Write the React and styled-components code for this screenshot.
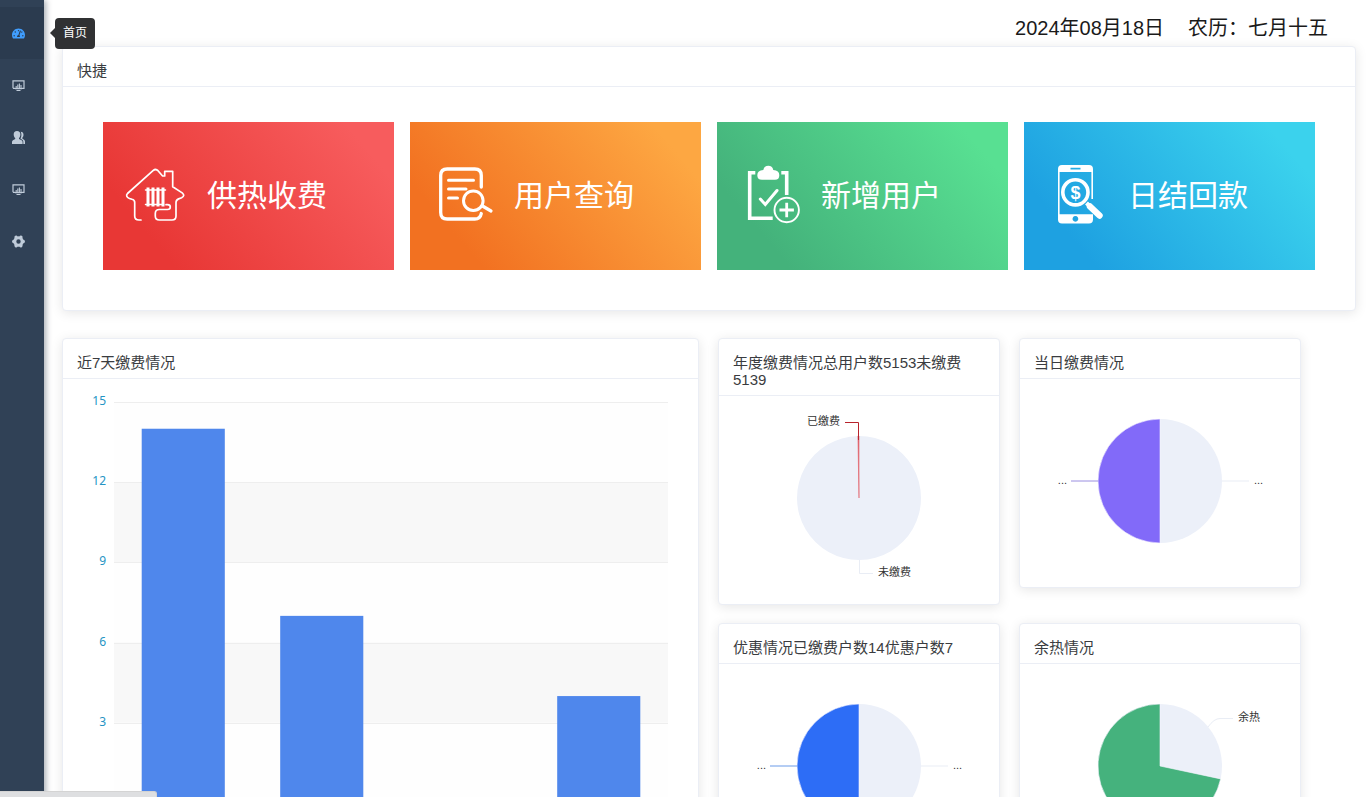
import React from 'react';
import styled, {createGlobalStyle} from 'styled-components';
import {FaTachometerAlt} from 'react-icons/fa';

const GlobalStyle = createGlobalStyle`
    * {
        box-sizing: border-box;
    }

    body {
        margin: 0;
        background: #ffffff;
        color: #3a3c40;
        font-family: "Liberation Sans", "Noto Sans CJK SC", sans-serif;
    }
`

const AppWrapper = styled.div`
    display: flex;
    height: 100vh;
    overflow: hidden;
`

const Sidebar = styled.nav`
    position: relative;
    z-index: 2;
    flex: none;
    width: 44px;
    padding-top: 7px;
    background: #304156;
    box-shadow: 2px 0 6px rgba(0, 21, 41, 0.35);
`

const SidebarLink = styled.a`
    position: relative;
    display: flex;
    align-items: center;
    height: 52px;
    padding-left: 12px;
    color: ${props => props.$active ? '#409eff' : '#bfcbd9'};
    background: ${props => props.$active ? '#2b3b4f' : 'transparent'};

    svg {
        display: block;
        width: 13px;
        height: 13px;
    }
`

const Tooltip = styled.span`
    position: absolute;
    top: 11px;
    left: 55px;
    padding: 7px 8px;
    border-radius: 4px;
    background: #303133;
    color: #ffffff;
    font-size: 12px;
    line-height: 17px;
    white-space: nowrap;

    &::before {
        content: '';
        position: absolute;
        top: 10px;
        left: -5px;
        border: 5px solid transparent;
        border-left: none;
        border-right-color: #303133;
    }
`

const Main = styled.main`
    flex: 1;
    min-width: 0;
    padding: 0 10px 0 18px;
`

const DateBar = styled.header`
    display: flex;
    justify-content: flex-end;
    align-items: center;
    gap: 24px;
    height: 46px;
    padding: 10px 28px 0 0;
    color: #1a1a1a;
    font-size: 20px;
    line-height: 28px;
`

const Card = styled.section`
    min-width: 0;
    border: 1px solid #ebeef5;
    border-radius: 4px;
    background: #ffffff;
    box-shadow: 0 2px 12px rgba(0, 0, 0, 0.1);
    grid-row: ${props => props.$tall ? 'span 2' : 'auto'};
`

const CardTitle = styled.h2`
    margin: 0;
    padding: 15px 14px 7px;
    border-bottom: 1px solid #ebeef5;
    font-size: 15px;
    font-weight: 400;
    line-height: 17px;
`

const TileGrid = styled.div`
    display: grid;
    grid-template-columns: repeat(4, 1fr);
    gap: 16px;
    padding: 35px 40px;
    padding-bottom: 40px;
`

const Tile = styled.a`
    display: flex;
    align-items: center;
    gap: 20px;
    height: 148px;
    padding-left: 20px;
    background: linear-gradient(50deg, ${props => props.$from} 18%, ${props => props.$to} 88%);
    color: #ffffff;
    font-size: 30px;
    line-height: 40px;
    text-decoration: none;

    svg {
        flex: none;
        width: 64px;
        height: 64px;
    }
`

const ChartGrid = styled.div`
    display: grid;
    grid-template-columns: 637fr 282fr 282fr;
    align-items: start;
    gap: 18px 19px;
    margin-top: 27px;
    padding-right: 55px;
`

const Chart = styled.svg`
    display: block;
    width: 100%;
    height: auto;
`

const AxisLabel = styled.text`
    fill: #2594c4;
    font-family: "Noto Sans", sans-serif;
    font-size: 12px;
    text-anchor: end;
`

const PieLabel = styled.text`
    fill: #333333;
    font-size: 11px;
    text-anchor: ${props => props.$end ? 'end' : 'start'};
`

const StatusBar = styled.div`
    position: fixed;
    z-index: 3;
    bottom: 0;
    left: 0;
    width: 157px;
    height: 6px;
    border: 1px solid #d4d4d4;
    border-width: 1px 1px 0 0;
    border-radius: 0 3px 0 0;
    background: #dedfe1;
`

const MonitorIcon = () => (
    <svg viewBox="0 0 13 13" fill="none" stroke="currentColor" aria-hidden="true">
        <path d="M1 9.3V1.8h11v7.5H9.5M1 9.3h2.5" strokeWidth="1.2" />
        <path d="M4.2 9V7M5.8 9V5.5M7.4 9V4.5M9 9V6" strokeWidth="1.1" />
        <path d="M3 9.6h7M4.5 11.5h4" strokeWidth="1.2" />
    </svg>
)

const UsersIcon = () => (
    <svg viewBox="0 0 13 13" fill="currentColor" aria-hidden="true">
        <path d="M5 0C7.2 0 8.4 1.4 8.4 3.4c0 1.500-.6 2.900-1.400 3.600v1l2.600 1.300c.7.4 1 .9 1 1.700v1.900H0V11c0-.8.3-1.300 1-1.700L3.200 8V7C2.300 6.300 1.700 4.900 1.700 3.400 1.700 1.400 2.800 0 5 0z" />
        <path d="M8.700.8c1.800 0 2.800 1.200 2.800 2.900 0 1.300-.5 2.400-1.200 3v.9l1.700 1.200c.6.4 1 .9 1 1.600v2.500h-1.700V11c0-1.200-.5-2-1.500-2.500L8.400 7.600c.6-.9 1-2.500 1-4.100 0-1.100-.3-2-.7-2.700z" />
    </svg>
)

const GearIcon = () => (
    <svg viewBox="0 0 13 13" fill="currentColor" aria-hidden="true">
        <circle cx="6.500" cy="6.500" r="3.700" fill="none" stroke="currentColor" strokeWidth="3" />
        {[0, 60, 120, 180, 240, 300].map(angle => (
            <circle key={angle} cx="11.300" cy="6.500" r="1.700" transform={`rotate(${angle} 6.5 6.5)`} />
        ))}
    </svg>
)

const HouseIcon = () => (
    <svg viewBox="0 0 64 64" fill="none" stroke="currentColor" strokeLinecap="round" strokeLinejoin="round" aria-hidden="true">
        <path d="M18 56h-2q-4.300 0-4.300-4V38.500q0-2.500-2.700-3.200l-2.500-.8Q2 32.500 4.500 29.500L30 6.700q2.700-2.400 5 0l4.600 5.300h2.100V7.300h8v15.400l9.500 6.200q3.300 2.800-.6 4.800l-3 1.200Q53 36 53 38.500V52q0 4-4 4H36.300q-4 0-4-4v-2.500q0-4 4-4h8.200q2.800 0 2.800-2.400t-2.800-2.400H43" strokeWidth="1.700" />
        <path d="M25 23.500v19M30 23.500v19M35 23.500v19M40 23.500v19" strokeWidth="3" strokeLinecap="butt" />
        <path d="M22.500 26h20M22.500 40.500h18" strokeWidth="1.500" />
    </svg>
)

const SearchDocIcon = () => (
    <svg viewBox="0 0 64 64" fill="none" stroke="currentColor" strokeLinecap="round" aria-hidden="true">
        <path d="M51.300 23V11.500Q51.300 5 44.800 5H17.200q-6.500 0-6.500 6.500v37q0 6.500 6.500 6.500h27.600q5.500 0 6.500-5.500" strokeWidth="3.300" />
        <path d="M18.500 16.200h25M18.500 25h17.500M18.500 34h9" strokeWidth="3" />
        <circle cx="43.300" cy="36.700" r="9.800" strokeWidth="3" />
        <path d="M52.500 42l8.500 5" strokeWidth="3.200" />
    </svg>
)

const AddUserIcon = () => (
    <svg viewBox="0 0 64 64" fill="none" stroke="currentColor" aria-hidden="true">
        <path d="M18.300 8.700h-5.600v45.600h23M44.300 8.700h5.400V31" strokeWidth="3.600" />
        <path d="M25 15.700h13q4.300 0 4.300-4.500 0-4.700-6-5.200-1-4.200-5-4.200t-5 4.200q-6 .5-6 5.200 0 4.500 4.700 4.500z" fill="currentColor" stroke="none" />
        <path d="M23.300 35l5 5.500L40 26.500" strokeWidth="3" strokeLinecap="round" />
        <circle cx="49.700" cy="46" r="12.200" strokeWidth="1.900" />
        <path d="M42.500 46h14.400M49.700 38.800v14.400" strokeWidth="2.800" />
    </svg>
)

const PhoneIcon = () => (
    <svg viewBox="0 0 64 64" fill="none" stroke="currentColor" aria-hidden="true">
        <path d="M14.800 8v43M48.200 8v27" strokeWidth="1.600" />
        <path d="M14 8V5q0-4 4-4h27q4 0 4 4v3zM26.500 3.800v1.800h10V3.800z" fill="currentColor" fillRule="evenodd" stroke="none" />
        <path d="M14 50.300h35v5.200q0 4-4 4H18q-4 0-4-4zM31.400 52a2.900 2.900 0 1 0 .01 0z" fill="currentColor" fillRule="evenodd" stroke="none" />
        <circle cx="31.400" cy="28.300" r="12.600" strokeWidth="3.600" />
        <path d="M42.500 39l3 3" strokeWidth="4" />
        <path d="M46 42.500l9.500 9" strokeWidth="6.400" strokeLinecap="round" />
        <text x="31.400" y="34.500" fill="currentColor" stroke="none" fontSize="18" fontWeight="700" textAnchor="middle">$</text>
    </svg>
)

const menu = [
    {label: '首页', icon: FaTachometerAlt, active: true},
    {label: '收费', icon: MonitorIcon},
    {label: '用户', icon: UsersIcon},
    {label: '报表', icon: MonitorIcon},
    {label: '设置', icon: GearIcon},
]

const tiles = [
    {label: '供热收费', icon: HouseIcon, from: '#e83735', to: '#f75c5d'},
    {label: '用户查询', icon: SearchDocIcon, from: '#f27121', to: '#fda742'},
    {label: '新增用户', icon: AddUserIcon, from: '#44b27b', to: '#58e092'},
    {label: '日结回款', icon: PhoneIcon, from: '#1ea1e1', to: '#3bd2ed'},
]

const payments = [14, 7, 0, 4];
const ticks = [15, 12, 9, 6, 3];

function BarChart() {
    const left = 51;
    const right = 605;
    const bottom = 424;
    const top = 23;
    const unit = (bottom - top) / 15;
    const slot = (right - left) / payments.length;
    const barWidth = slot * 0.6;

    return (
        <Chart viewBox="0 0 635 460" role="img" aria-label="近7天缴费情况">
            {ticks.map((tick, i) => {
                const y = bottom - tick * unit;
                return (
                    <g key={tick}>
                        <rect x={left} y={y} width={right - left} height={unit * 3} fill={i % 2 ? '#f8f8f8' : '#fefefe'} />
                        <line x1={left} x2={right} y1={Math.round(y) + 0.5} y2={Math.round(y) + 0.5} stroke="#eeeeee" />
                        <AxisLabel x={left - 8} y={y + 3}>{tick}</AxisLabel>
                    </g>
                )
            })}
            {payments.map((value, i) => (
                <rect
                    key={i}
                    x={left + slot * i + (slot - barWidth) / 2}
                    y={bottom - value * unit}
                    width={barWidth}
                    height={value * unit}
                    fill="#4f87ec"
                />
            ))}
        </Chart>
    )
}

const CX = 140;
const CY = 102;
const R = 62;

const point = deg => {
    const a = deg * Math.PI / 180;
    return `${CX + R * Math.sin(a)} ${CY - R * Math.cos(a)}`;
}

const slice = (from, to) => (
    `M${CX} ${CY}L${point(from)}A${R} ${R} 0 ${to - from > 180 ? 1 : 0} 1 ${point(to)}Z`
)

function PieChart({name, color, lineColor, split, labels}) {
    return (
        <Chart viewBox="0 0 280 208" role="img" aria-label={name}>
            <path d={slice(0, split)} fill="#ecf0f9" />
            <path d={slice(split, 360)} fill={color} stroke={split < 350 ? '#f6f4ff' : color} strokeWidth="0.600" />
            {labels.map((label, i) => (
                <g key={i}>
                    <path d={label.line} fill="none" stroke={label.muted ? '#e9edf5' : lineColor} />
                    <PieLabel x={label.x} y={label.y} $end={label.end}>{label.text}</PieLabel>
                </g>
            ))}
        </Chart>
    )
}

const halfLabels = [
    {text: '...', x: 47, y: 105, end: true, line: 'M78 102H51'},
    {text: '...', x: 234, y: 105, muted: true, line: 'M202 102H229'},
]

const pies = [
    {
        title: '年度缴费情况总用户数5153未缴费5139',
        color: '#e0616b',
        lineColor: '#b8232c',
        split: 359,
        labels: [
            {text: '已缴费', x: 121, y: 29, end: true, line: 'M139.500 44V26.500H126'},
            {text: '未缴费', x: 159, y: 180, muted: true, line: 'M140.500 164V177.500H154'},
        ],
    },
    {title: '当日缴费情况', color: '#826af9', lineColor: '#9a8ee0', split: 180, labels: halfLabels},
    {title: '优惠情况已缴费户数14优惠户数7', color: '#2d6df6', lineColor: '#6b9be8', split: 180, labels: halfLabels},
    {
        title: '余热情况',
        color: '#45b27d',
        lineColor: '#45b27d',
        split: 102,
        labels: [
            {text: '余热', x: 218, y: 57, muted: true, line: 'M188 63Q194 54.500 200 54.500H213'},
        ],
    },
]

function App() {
    return (
        <AppWrapper>
            <GlobalStyle />
            <Sidebar>
                {menu.map(({label, icon: Icon, active}, i) => (
                    <SidebarLink key={i} href="#" aria-label={label} $active={active}>
                        <Icon />
                        {active && <Tooltip role="tooltip">{label}</Tooltip>}
                    </SidebarLink>
                ))}
            </Sidebar>
            <Main>
                <DateBar>
                    <span>2024年08月18日</span>
                    <span>农历：七月十五</span>
                </DateBar>
                <Card>
                    <CardTitle>快捷</CardTitle>
                    <TileGrid>
                        {tiles.map(({label, icon: Icon, from, to}) => (
                            <Tile key={label} href="#" $from={from} $to={to}>
                                <Icon />
                                {label}
                            </Tile>
                        ))}
                    </TileGrid>
                </Card>
                <ChartGrid>
                    <Card $tall>
                        <CardTitle>近7天缴费情况</CardTitle>
                        <BarChart />
                    </Card>
                    {pies.map(({title, ...pie}) => (
                        <Card key={title}>
                            <CardTitle>{title}</CardTitle>
                            <PieChart name={title} {...pie} />
                        </Card>
                    ))}
                </ChartGrid>
            </Main>
            <StatusBar />
        </AppWrapper>
    );
}

export default App;
